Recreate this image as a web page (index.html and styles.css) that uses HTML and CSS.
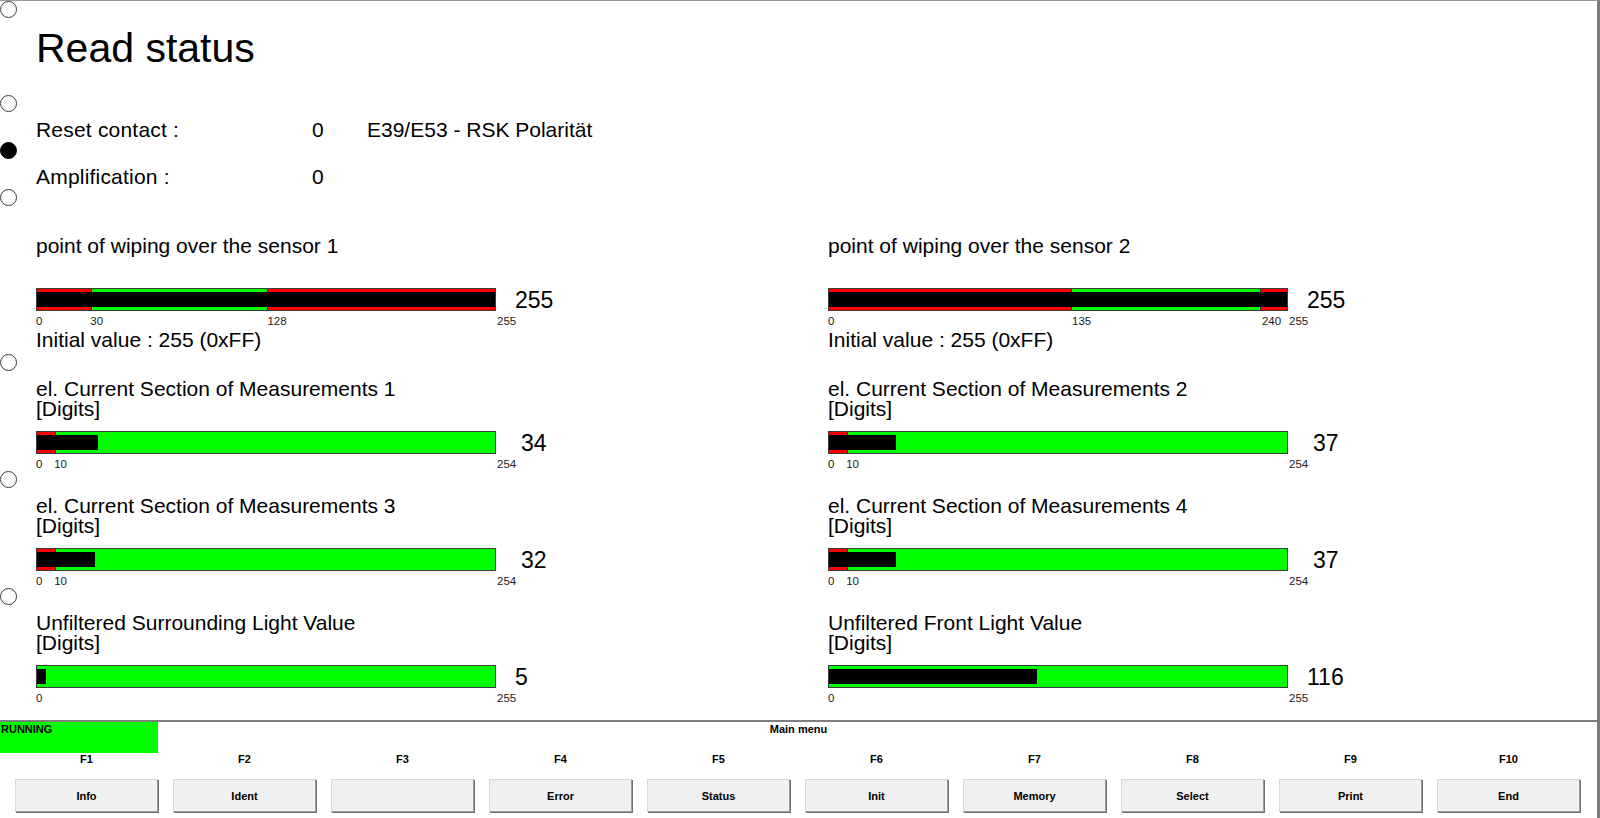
FILE: index.html
```html
<!DOCTYPE html>
<html lang="de">
<head>
    <meta charset="UTF-8">
    <meta name="viewport" content="width=device-width, initial-scale=1.0">
    <title>Read status</title>
    <link rel="stylesheet" href="styles.css">
</head>
<body>
    <div class="screen">
        <!-- margin markers on the left edge -->
        <div class="holes">
            <span class="hole hole-1"></span>
            <span class="hole hole-2"></span>
            <span class="hole hole-3 is-on"></span>
            <span class="hole hole-4"></span>
            <span class="hole hole-5"></span>
            <span class="hole hole-6"></span>
            <span class="hole hole-7"></span>
        </div>

        <main class="content">
            <h1 class="page-title">Read status</h1>

            <div class="info">
                <div class="info-row">
                    <span class="info-label">Reset contact :</span>
                    <span class="info-value">0</span>
                    <span class="info-text">E39/E53 - RSK Polarität</span>
                </div>
                <div class="info-row">
                    <span class="info-label">Amplification :</span>
                    <span class="info-value">0</span>
                </div>
            </div>

            <div class="gauges">
                <!-- Sensor 1 -->
                <section class="gauge">
                    <div class="gauge-title">point of wiping over the sensor 1</div>
                    <div class="gauge-row">
                        <div class="bar">
                            <div class="zone zone-red" style="width:11.765%"></div>
                            <div class="zone zone-green" style="width:38.431%"></div>
                            <div class="zone zone-red" style="width:49.804%"></div>
                            <div class="bar-fill" style="width:100%"></div>
                        </div>
                        <span class="gauge-value">255</span>
                    </div>
                    <div class="scale">
                        <span style="left:0%">0</span>
                        <span style="left:11.765%">30</span>
                        <span style="left:50.196%">128</span>
                        <span style="left:100%">255</span>
                    </div>
                    <div class="gauge-note">Initial value : 255 (0xFF)</div>
                </section>

                <!-- Sensor 2 -->
                <section class="gauge">
                    <div class="gauge-title">point of wiping over the sensor 2</div>
                    <div class="gauge-row">
                        <div class="bar">
                            <div class="zone zone-red" style="width:52.941%"></div>
                            <div class="zone zone-green" style="width:41.176%"></div>
                            <div class="zone zone-red" style="width:5.883%"></div>
                            <div class="bar-fill" style="width:100%"></div>
                        </div>
                        <span class="gauge-value">255</span>
                    </div>
                    <div class="scale">
                        <span style="left:0%">0</span>
                        <span style="left:52.941%">135</span>
                        <span style="left:94.118%">240</span>
                        <span style="left:100%">255</span>
                    </div>
                    <div class="gauge-note">Initial value : 255 (0xFF)</div>
                </section>

                <!-- Current 1 -->
                <section class="gauge">
                    <div class="gauge-title">el. Current Section of Measurements 1<br>[Digits]</div>
                    <div class="gauge-row">
                        <div class="bar">
                            <div class="zone zone-red" style="width:3.937%"></div>
                            <div class="zone zone-green" style="width:96.063%"></div>
                            <div class="bar-fill" style="width:13.386%"></div>
                        </div>
                        <span class="gauge-value is-offset">34</span>
                    </div>
                    <div class="scale">
                        <span style="left:0%">0</span>
                        <span style="left:3.937%">10</span>
                        <span style="left:100%">254</span>
                    </div>
                </section>

                <!-- Current 2 -->
                <section class="gauge">
                    <div class="gauge-title">el. Current Section of Measurements 2<br>[Digits]</div>
                    <div class="gauge-row">
                        <div class="bar">
                            <div class="zone zone-red" style="width:3.937%"></div>
                            <div class="zone zone-green" style="width:96.063%"></div>
                            <div class="bar-fill" style="width:14.567%"></div>
                        </div>
                        <span class="gauge-value is-offset">37</span>
                    </div>
                    <div class="scale">
                        <span style="left:0%">0</span>
                        <span style="left:3.937%">10</span>
                        <span style="left:100%">254</span>
                    </div>
                </section>

                <!-- Current 3 -->
                <section class="gauge">
                    <div class="gauge-title">el. Current Section of Measurements 3<br>[Digits]</div>
                    <div class="gauge-row">
                        <div class="bar">
                            <div class="zone zone-red" style="width:3.937%"></div>
                            <div class="zone zone-green" style="width:96.063%"></div>
                            <div class="bar-fill" style="width:12.598%"></div>
                        </div>
                        <span class="gauge-value is-offset">32</span>
                    </div>
                    <div class="scale">
                        <span style="left:0%">0</span>
                        <span style="left:3.937%">10</span>
                        <span style="left:100%">254</span>
                    </div>
                </section>

                <!-- Current 4 -->
                <section class="gauge">
                    <div class="gauge-title">el. Current Section of Measurements 4<br>[Digits]</div>
                    <div class="gauge-row">
                        <div class="bar">
                            <div class="zone zone-red" style="width:3.937%"></div>
                            <div class="zone zone-green" style="width:96.063%"></div>
                            <div class="bar-fill" style="width:14.567%"></div>
                        </div>
                        <span class="gauge-value is-offset">37</span>
                    </div>
                    <div class="scale">
                        <span style="left:0%">0</span>
                        <span style="left:3.937%">10</span>
                        <span style="left:100%">254</span>
                    </div>
                </section>

                <!-- Light values -->
                <section class="gauge">
                    <div class="gauge-title">Unfiltered Surrounding Light Value<br>[Digits]</div>
                    <div class="gauge-row">
                        <div class="bar">
                            <div class="zone zone-green" style="width:100%"></div>
                            <div class="bar-fill" style="width:1.961%"></div>
                        </div>
                        <span class="gauge-value">5</span>
                    </div>
                    <div class="scale">
                        <span style="left:0%">0</span>
                        <span style="left:100%">255</span>
                    </div>
                </section>

                <section class="gauge">
                    <div class="gauge-title">Unfiltered Front Light Value<br>[Digits]</div>
                    <div class="gauge-row">
                        <div class="bar">
                            <div class="zone zone-green" style="width:100%"></div>
                            <div class="bar-fill" style="width:45.490%"></div>
                        </div>
                        <span class="gauge-value">116</span>
                    </div>
                    <div class="scale">
                        <span style="left:0%">0</span>
                        <span style="left:100%">255</span>
                    </div>
                </section>
            </div>
        </main>

        <footer class="menu">
            <div class="menu-status">
                <div class="state">RUNNING</div>
                <div class="menu-title">Main menu</div>
            </div>
            <div class="fkeys">
                <div class="fkey"><div class="fkey-label">F1</div><button class="fkey-btn">Info</button></div>
                <div class="fkey"><div class="fkey-label">F2</div><button class="fkey-btn">Ident</button></div>
                <div class="fkey"><div class="fkey-label">F3</div><button class="fkey-btn"></button></div>
                <div class="fkey"><div class="fkey-label">F4</div><button class="fkey-btn">Error</button></div>
                <div class="fkey"><div class="fkey-label">F5</div><button class="fkey-btn">Status</button></div>
                <div class="fkey"><div class="fkey-label">F6</div><button class="fkey-btn">Init</button></div>
                <div class="fkey"><div class="fkey-label">F7</div><button class="fkey-btn">Memory</button></div>
                <div class="fkey"><div class="fkey-label">F8</div><button class="fkey-btn">Select</button></div>
                <div class="fkey"><div class="fkey-label">F9</div><button class="fkey-btn">Print</button></div>
                <div class="fkey"><div class="fkey-label">F10</div><button class="fkey-btn">End</button></div>
            </div>
        </footer>
    </div>
</body>
</html>
```

FILE: styles.css
```css
body {
    margin: 0;
    font-family: "Liberation Sans", Arial, sans-serif;
    color: #000;
    background: #fff;
}

.screen {
    position: relative;
    width: 1600px;
    height: 818px;
    box-sizing: border-box;
    border-top: 1px solid #9a9a9a;
    border-right: 3px solid #7c7c7c;
    overflow: hidden;
}

/* Margin markers */
.holes {
    position: absolute;
    left: 0;
    top: 0;
}

.hole {
    position: absolute;
    left: 0;
    width: 17px;
    height: 17px;
    box-sizing: border-box;
    border: 1px solid #3a3a3a;
    border-radius: 50%;
    background: #fff;
}

.hole.is-on {
    background: #000;
    border-color: #000;
}

.hole-1 { top: 0; }
.hole-2 { top: 94px; }
.hole-3 { top: 141px; }
.hole-4 { top: 188px; }
.hole-5 { top: 353px; }
.hole-6 { top: 470px; }
.hole-7 { top: 587px; }

/* Main content */
.content {
    height: 719px;
    box-sizing: border-box;
    padding: 24px 0 0 36px;
}

.page-title {
    margin: 0;
    font-size: 41px;
    font-weight: normal;
    line-height: 46px;
}

.info {
    margin-top: 35px;
}

.info-row {
    display: grid;
    grid-template-columns: 276px 55px auto;
    font-size: 21px;
    line-height: 47px;
}

.info-label {
    letter-spacing: 0.2px;
}

/* Gauges */
.gauges {
    display: grid;
    grid-template-columns: 792px 1fr;
    row-gap: 26px;
    margin-top: 36px;
}

.gauge-title {
    font-size: 21px;
    line-height: 20px;
    min-height: 40px;
}

.gauge-row {
    display: flex;
    align-items: flex-start;
    height: 23px;
    margin-top: 12px;
}

.bar {
    position: relative;
    display: flex;
    width: 460px;
    height: 23px;
    box-sizing: border-box;
    border: 1px solid #3a3a3a;
}

.zone {
    height: 100%;
    box-sizing: border-box;
}

.zone + .zone {
    border-left: 1px solid #2a2a2a;
}

.zone-red {
    background: #ff0000;
}

.zone-green {
    background: #00ff00;
}

.bar-fill {
    position: absolute;
    left: 0;
    top: 3px;
    bottom: 3px;
    background: #000;
}

.gauge-value {
    margin-left: 19px;
    padding-top: 1px;
    font-size: 23px;
    line-height: 22px;
}

.gauge-value.is-offset {
    margin-left: 25px;
}

.scale {
    position: relative;
    width: 461px;
    height: 12px;
    margin-top: 4px;
    font-size: 11.5px;
    line-height: 13px;
    color: #1a1a1a;
}

.scale span {
    position: absolute;
    top: 0;
}

.gauge-note {
    margin: 3px 0 3px;
    font-size: 21px;
    line-height: 20px;
}

/* Bottom menu */
.menu {
    border-top: 2px solid #7f7f7f;
    font-size: 11px;
    font-weight: bold;
}

.menu-status {
    display: grid;
    grid-template-columns: 158px 1fr 158px;
    height: 31px;
}

.state {
    background: #00ff00;
    padding: 1px 0 0 1px;
    line-height: 13px;
}

.menu-title {
    text-align: center;
    padding-top: 1px;
    line-height: 13px;
}

.fkeys {
    display: flex;
    gap: 15px;
    padding-left: 15px;
}

.fkey {
    width: 143px;
}

.fkey-label {
    height: 14px;
    line-height: 13px;
    text-align: center;
}

.fkey-btn {
    display: block;
    width: 143px;
    height: 33px;
    margin-top: 12px;
    padding: 0;
    font-family: inherit;
    font-size: 11px;
    font-weight: bold;
    color: #000;
    background: #f0f0f0;
    border: 1px solid;
    border-color: #d8d8d8 #a0a0a0 #a0a0a0 #d8d8d8;
    box-shadow: 1px 1px 0 #6e6e6e;
}
```
